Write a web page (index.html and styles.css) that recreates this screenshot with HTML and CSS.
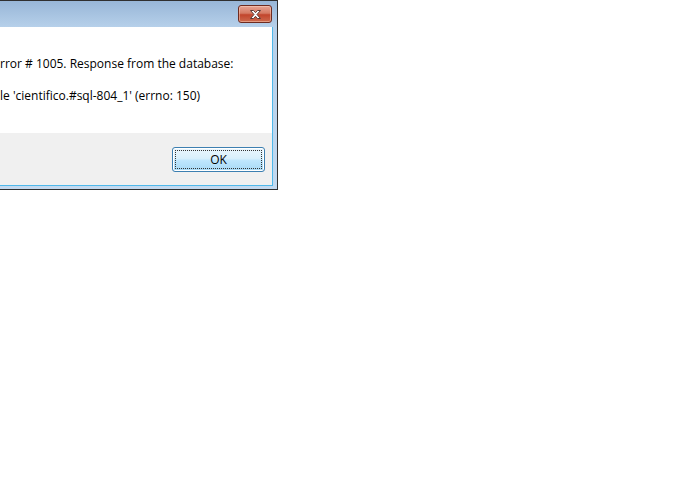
FILE: index.html
```html
<!DOCTYPE html>
<html>
<head>
    <title>Error</title>
    <link rel="stylesheet" href="styles.css">
</head>
<body>
    <div class="window">
        <div class="titlebar">
            <button class="close-button" aria-label="Close">
                <svg width="17" height="11" viewBox="0 0 17 11">
                    <path d="M3.5 1.5h3l2 2.2 2-2.2h3l-3.5 4 3.5 4h-3l-2-2.2-2 2.2h-3l3.5-4z" fill="#fff" stroke="#5b3a36" stroke-width="1" stroke-linejoin="round"/>
                </svg>
            </button>
        </div>
        <div class="client">
            <div class="message">
                <p>rror # 1005. Response from the database:</p>
                <p class="detail">le 'cientifico.#sql-804_1' (errno: 150)</p>
            </div>
            <div class="footer">
                <button class="ok-button"><span class="focus">OK</span></button>
            </div>
        </div>
    </div>
</body>
</html>
```

FILE: styles.css
```css
body {
    margin: 0;
    background-color: #fff;
    font-family: "Open Sans", "DejaVu Sans", sans-serif;
    font-size: 12px;
    color: #000;
}
.window {
    width: 273px;
    border: 1px solid #2f2f2f;
    border-left: none;
    padding: 0 4px 3px 0;
    background: linear-gradient(#98b6d7, #b6d0ea 26px, #c2d9f0);
}
.titlebar {
    height: 22px;
    padding-top: 4px;
    display: flex;
    justify-content: flex-end;
    align-items: flex-start;
}
.close-button {
    width: 34px;
    height: 18px;
    margin-right: 1px;
    padding: 0;
    display: flex;
    align-items: center;
    justify-content: center;
    border: 1px solid #6e2b20;
    border-radius: 3px;
    background: linear-gradient(#e8a493, #d57a63 45%, #c2452c 55%, #cd6a4e);
    box-shadow: inset 0 0 0 1px rgba(255, 220, 200, 0.45);
}
.client {
    background-color: #fff;
    border-right: 1px solid #4fb8ea;
    border-bottom: 1px solid #4fb8ea;
}
.message {
    height: 106px;
    box-sizing: border-box;
    padding-top: 29px;
    line-height: 16px;
}
.message p {
    margin: 0;
}
.message .detail {
    margin-top: 16px;
}
.footer {
    height: 52px;
    box-sizing: border-box;
    background-color: #f0f0f0;
    padding: 14px 7px 0 0;
    display: flex;
    justify-content: flex-end;
    align-items: flex-start;
}
.ok-button {
    width: 93px;
    height: 25px;
    padding: 2px;
    border: 1px solid #3c7fb1;
    border-radius: 3px;
    background: linear-gradient(#eaf6fd, #d9f0fc 45%, #bee6fd 55%, #a7d9f5);
    box-shadow: inset 0 0 0 1px #fff;
    font-family: inherit;
    font-size: 12px;
    color: #000;
}
.ok-button .focus {
    display: flex;
    align-items: center;
    justify-content: center;
    height: 100%;
    box-sizing: border-box;
    border: 1px dotted #333;
}
```
